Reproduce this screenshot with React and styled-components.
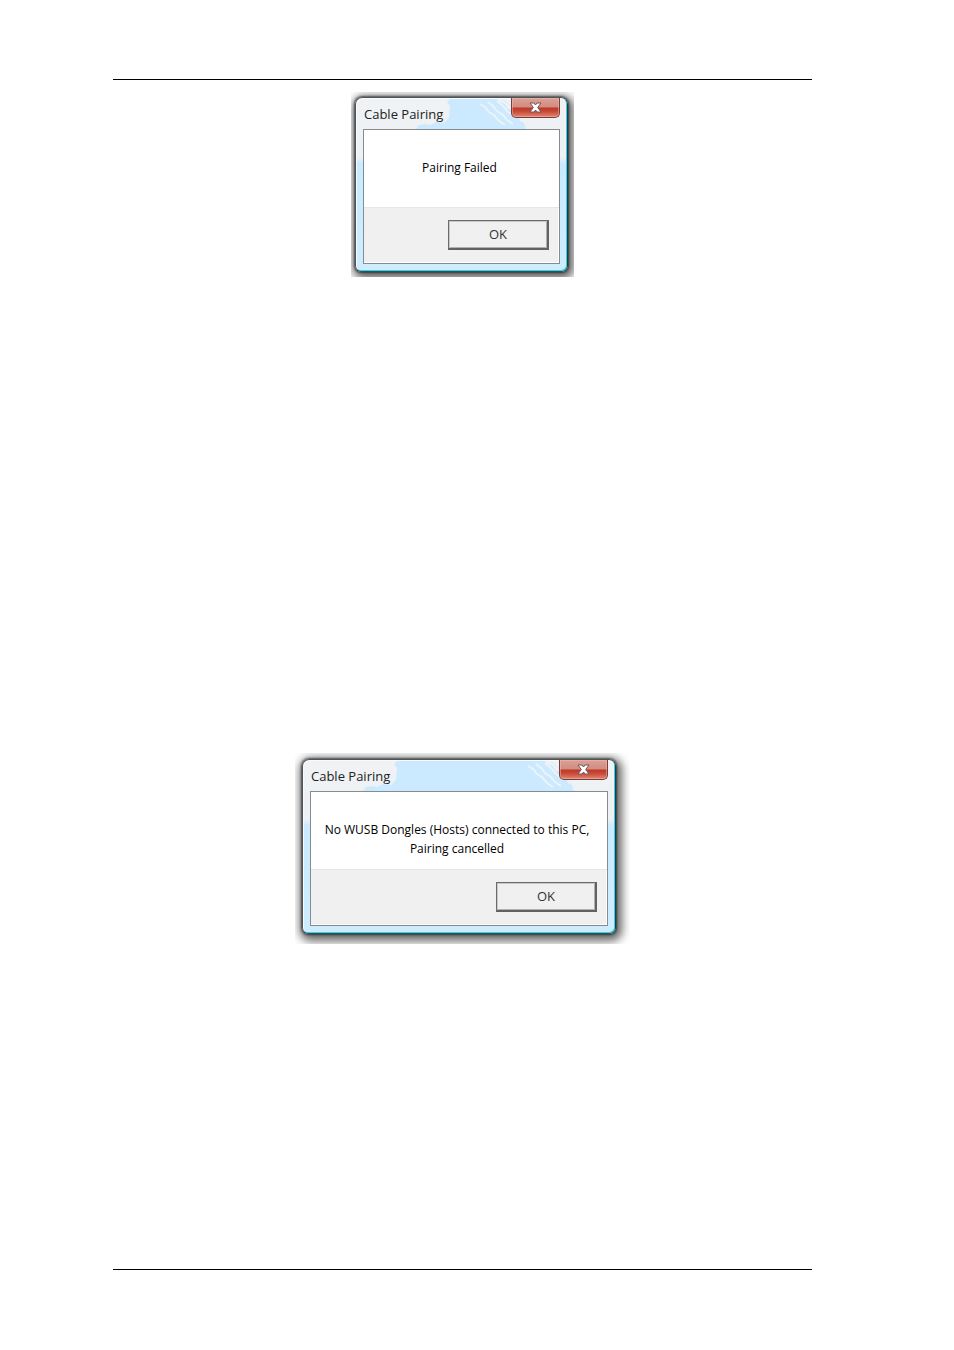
import React from "react";
import styled, { createGlobalStyle } from "styled-components";

const GlobalStyle = createGlobalStyle`
  * { box-sizing: border-box; }
  body { margin: 0; background: #fff; }
`;

const Page = styled.main`
  display: flex;
  flex-direction: column;
  align-items: center;
  padding: 79px 142px 80px 113px;
`;

const Rule = styled.hr`
  width: 100%;
  height: 1px;
  margin: 0;
  border: 0;
  background: #000;
`;

const Figure = styled.figure`
  margin: ${(p) => p.$margin};
  padding: ${(p) => p.$padding};
  width: ${(p) => p.$width};
  overflow: hidden;
`;

const Window = styled.section`
  position: relative;
  padding: 0 7px 7px;
  border: 1px solid #4d5458;
  border-right-color: #17404c;
  border-bottom-color: #27535b;
  border-radius: 7px 7px 6px 6px;
  background: linear-gradient(#f0f2f4 0, #eef2f5 34%, #c9ebff 38%, #cdedff 100%);
  box-shadow:
    inset -1px -1px 0 #37cfe2,
    inset 1px 1px 0 #f5fbff,
    0 0 2px 1px rgba(0, 0, 0, 0.5),
    2px 3px 10px 4px rgba(0, 0, 0, 0.6);
`;

const Glass = styled.div`
  position: absolute;
  top: 1px;
  left: 1px;
  right: 2px;
  display: flex;
  height: 30px;
`;

const GlassFill = styled.div`
  flex: 1;
  background: #cbeaff;
`;

const TitleBar = styled.header`
  position: relative;
  display: flex;
  justify-content: space-between;
  align-items: flex-start;
  height: 31px;
`;

const Title = styled.h2`
  margin: 0;
  padding: 6px 1px 0;
  font: 400 13px/20px "Open Sans", "Noto Sans", sans-serif;
  color: #222;
  white-space: nowrap;
`;

const CloseButton = styled.button`
  display: flex;
  align-items: center;
  justify-content: center;
  width: 49px;
  height: 20px;
  padding: 0;
  border: 1px solid #74403d;
  border-top: 0;
  border-radius: 0 0 5px 5px;
  background: linear-gradient(#d9a297 0, #d48b7f 48%, #bb3826 52%, #c94c38 72%, #e08673 100%);
  box-shadow: inset 0 0 0 1px rgba(255, 190, 175, 0.45);
`;

const Client = styled.div`
  position: relative;
  border: 1px solid #858b8e;
  background: #f0f0f0;
  box-shadow: inset -1px -1px 0 #fff;
`;

const Message = styled.p`
  min-height: 78px;
  margin: 0;
  padding: 28px 12px 0 8px;
  border-bottom: 1px solid #e6e6e6;
  background: #fff;
  font: 400 12px/19px "Open Sans", "Noto Sans", sans-serif;
  color: #000;
  text-align: center;
`;

const Actions = styled.footer`
  display: flex;
  justify-content: flex-end;
  padding: 12px 10px 13px;
`;

const OkButton = styled.button`
  width: 101px;
  height: 30px;
  padding: 0 0 2px;
  border: 1px solid #6c6c6c;
  border-right: 2px solid #626262;
  border-bottom: 2px solid #626262;
  background: #f0f0f0;
  box-shadow: inset 1px 1px 0 #c8c8c8, inset -1px -1px 0 #b0b0b0;
  font: 400 13px/20px "Open Sans", "Noto Sans", sans-serif;
  color: #333;
`;

function CloseIcon() {
  return (
    <svg width="13" height="11" viewBox="0 0 13 11" aria-hidden="true">
      <path
        d="M1 1h4l1.500 2L8 1h4L8.700 5.500 12 10H8L6.500 8 5 10H1l3.300-4.500z"
        fill="#fff"
        stroke="#70575a"
        strokeWidth="1"
        strokeLinejoin="round"
      />
    </svg>
  );
}

function TitleGlass() {
  return (
    <Glass aria-hidden="true">
      <svg width="104" height="30" viewBox="0 0 104 30">
        <path
          d="M104 0H93l-3 3 3 4-1 12-5 5-8-1-6 3-5-1-6 1-3 4h45z"
          fill="#cbeaff"
        />
      </svg>
      <GlassFill />
      <svg width="92" height="30" viewBox="0 0 92 30">
        <path
          d="M0 0h24l3 3 5 2 2 4 5 2 2 5 5 2 1 4 4 2 2 6H0z"
          fill="#cbeaff"
        />
        <path
          d="M7 5l5 3 4 5 5 3 5 6 6 4M15 3l5 4 4 5 6 4 4 5 6 4M24 2l6 5 5 6 6 4"
          fill="none"
          stroke="#eef3f6"
          strokeWidth="2"
        />
        <path d="M30 1l7 5 5 6M39 2l4 5" fill="none" stroke="#d5eefd" strokeWidth="1" />
      </svg>
    </Glass>
  );
}

function Dialog({ margin, padding, width, children }) {
  return (
    <Figure $margin={margin} $padding={padding} $width={width}>
      <Window role="dialog" aria-label="Cable Pairing">
        <TitleGlass />
        <TitleBar>
          <Title>Cable Pairing</Title>
          <CloseButton type="button" aria-label="Close">
            <CloseIcon />
          </CloseButton>
        </TitleBar>
        <Client>
          <Message>{children}</Message>
          <Actions>
            <OkButton type="button">OK</OkButton>
          </Actions>
        </Client>
      </Window>
    </Figure>
  );
}

export default function App() {
  return (
    <>
      <GlobalStyle />
      <Page>
        <Rule />
        <Dialog margin="12px 0 0" padding="5px 6px 5px 4px" width="223px">
          Pairing Failed
        </Dialog>
        <Dialog margin="476px 0 325px" padding="6px 14px 10px 7px" width="335px">
          No WUSB Dongles (Hosts) connected to this PC,
          <br />
          Pairing cancelled
        </Dialog>
        <Rule />
      </Page>
    </>
  );
}
